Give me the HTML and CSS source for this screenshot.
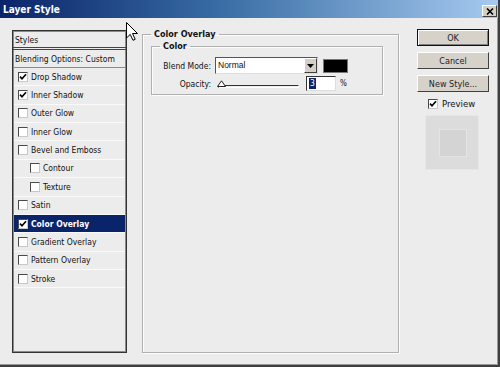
FILE: index.html
```html
<!DOCTYPE html>
<html lang="en">
<head>
  <meta charset="UTF-8" />
  <title>Layer Style</title>
  <link rel="stylesheet" href="styles.css">
</head>
<body>
  <div class="dialog">
    <div class="titlebar">
      <span class="title">Layer Style</span>
      <span class="close">
        <svg width="8" height="7" viewBox="0 0 8 7"><path d="M1 0.5 L7 6.5 M7 0.5 L1 6.5" stroke="#000" stroke-width="1.6"/></svg>
      </span>
    </div>

    <div class="content">
      <div class="styles-list">
        <div class="list-head">Styles</div>
        <div class="list-blend">Blending Options: Custom</div>
        <div class="row"><span class="cb on"></span>Drop Shadow</div>
        <div class="row"><span class="cb on"></span>Inner Shadow</div>
        <div class="row"><span class="cb"></span>Outer Glow</div>
        <div class="row"><span class="cb"></span>Inner Glow</div>
        <div class="row"><span class="cb"></span>Bevel and Emboss</div>
        <div class="row sub"><span class="cb"></span>Contour</div>
        <div class="row sub"><span class="cb"></span>Texture</div>
        <div class="row"><span class="cb"></span>Satin</div>
        <div class="row selected"><span class="cb on"></span>Color Overlay</div>
        <div class="row"><span class="cb"></span>Gradient Overlay</div>
        <div class="row"><span class="cb"></span>Pattern Overlay</div>
        <div class="row"><span class="cb"></span>Stroke</div>
      </div>

      <fieldset class="group outer">
        <legend>Color Overlay</legend>
        <fieldset class="group inner">
          <legend>Color</legend>
          <div class="field">
            <label class="field-label">Blend Mode:</label>
            <div class="select">
              <span class="select-text">Normal</span>
              <span class="select-btn">
                <svg width="7" height="4" viewBox="0 0 7 4"><path d="M0 0 H7 L3.5 4 Z" fill="#000"/></svg>
              </span>
            </div>
            <span class="swatch"></span>
          </div>
          <div class="field field-opacity">
            <label class="field-label">Opacity:</label>
            <div class="slider">
              <span class="track"></span>
              <svg class="thumb" width="9" height="7" viewBox="0 0 9 7"><path d="M0.5 6.5 L4.5 0.8 L8.5 6.5 Z" fill="#fff" stroke="#222" stroke-width="1"/></svg>
            </div>
            <div class="num"><span class="sel">3</span></div>
            <span class="unit">%</span>
          </div>
        </fieldset>
      </fieldset>

      <div class="actions">
        <button class="btn default">OK</button>
        <button class="btn">Cancel</button>
        <button class="btn">New Style...</button>
        <div class="preview-check"><span class="cb on"></span>Preview</div>
        <div class="preview-box"><div class="preview-inner"></div></div>
      </div>
    </div>

    <svg class="cursor" width="12" height="19" viewBox="0 0 12 19"><path d="M0.5 0.5 L0.5 16 L4.2 12.4 L7 18.3 L9.2 17.3 L6.5 11.5 L11.5 11.5 Z" fill="#fff" stroke="#000" stroke-width="1"/></svg>
  </div>
</body>
</html>
```

FILE: styles.css
```css
* {
  box-sizing: border-box;
}
body {
  margin: 0;
  font-family: "DejaVu Sans Condensed", "Liberation Sans", Arial, sans-serif;
  font-size: 8.5px;
  color: #111;
  background: #ececec;
}
.dialog {
  position: relative;
  width: 500px;
  height: 367px;
  background: #ececec;
  border-right: 2px solid #3e3e3e;
  border-bottom: 2px solid #3e3e3e;
  box-shadow: inset -1px -1px 0 #9a9a9a;
}
.titlebar {
  height: 18px;
  display: flex;
  align-items: center;
  justify-content: space-between;
  padding: 0 1px 0 3px;
  background: linear-gradient(to right, #0a246a 0%, #3a6ea5 45%, #a6caf0 100%);
}
.title {
  color: #fff;
  font-weight: bold;
  font-size: 10px;
}
.close {
  width: 15px;
  height: 12px;
  margin-top: 4px;
  display: flex;
  align-items: center;
  justify-content: center;
  background: #d4d0c8;
  border: 1px solid;
  border-color: #fff #404040 #404040 #fff;
}
.content {
  display: flex;
  padding: 12px 0 0 12px;
}

/* left list */
.styles-list {
  width: 115px;
  height: 323px;
  border: 1px solid #333;
  box-shadow: inset 0 0 0 1px #8a8a8a;
  background: #ececec;
}
.list-head {
  height: 19px;
  padding: 4px 0 0 2px;
  border-bottom: 3px double #444;
}
.list-blend {
  height: 18px;
  padding: 4px 0 0 2px;
  border-bottom: 1px solid #8a8a8a;
}
.row {
  height: 18.36px;
  display: flex;
  align-items: center;
  padding-left: 4px;
  margin: 0 1px;
  border-bottom: 1px solid #fafafa;
}
.row.sub {
  padding-left: 16px;
}
.row.selected {
  background: #0a246a;
  color: #fff;
  font-weight: bold;
}
.cb {
  display: inline-block;
  width: 10px;
  height: 10px;
  margin-right: 3px;
  background: #fff;
  border: 1px solid;
  border-color: #4a4a4a #c8c8c8 #c8c8c8 #4a4a4a;
  flex-shrink: 0;
}
.cb.on {
  background: #fff url("data:image/svg+xml;utf8,<svg xmlns='http://www.w3.org/2000/svg' width='8' height='8' viewBox='0 0 8 8'><path d='M1 3.6 L3 5.8 L7 1.2' fill='none' stroke='black' stroke-width='1.6'/></svg>") no-repeat center;
}

/* group boxes */
.group {
  margin: 0;
  border: 1px solid #b0b0b0;
  box-shadow: 1px 1px 0 #fdfdfd, inset 1px 1px 0 #fdfdfd;
}
.group legend {
  padding: 0 3px;
  font-weight: bold;
  font-size: 9px;
  line-height: 11px;
}
.outer {
  width: 257px;
  height: 324px;
  margin: -1px 0 0 15px;
  padding: 1px 15px 0 8px;
}
.inner {
  width: 232px;
  padding: 5px 8px 3px 8px;
}
.field {
  display: flex;
  align-items: center;
  height: 17px;
}
.field-opacity {
  height: 15px;
  margin-top: 2px;
}
.field-label {
  width: 51px;
  text-align: right;
}
.select {
  display: flex;
  width: 103px;
  height: 17px;
  margin-left: 4px;
  background: #fff;
  border: 1px solid;
  border-color: #555 #ddd #ddd #555;
}
.select-text {
  flex: 1;
  padding: 2px 0 0 2px;
  font-family: "Liberation Sans", Arial, sans-serif;
  font-size: 8.5px;
}
.select-btn {
  width: 13px;
  display: flex;
  align-items: center;
  justify-content: center;
  background: #d4d0c8;
  border: 1px solid;
  border-color: #fff #404040 #404040 #fff;
}
.swatch {
  width: 25px;
  height: 14px;
  margin-left: 5px;
  background: #000;
  border: 1px solid #777;
}
.slider {
  position: relative;
  width: 82px;
  height: 12px;
  margin-left: 6px;
}
.track {
  position: absolute;
  left: 1px;
  right: 0;
  top: 7px;
  height: 3px;
  background: #ececec;
  border: 1px solid;
  border-color: #333 #fff #fff #333;
}
.thumb {
  position: absolute;
  left: 0;
  top: 2px;
}
.num {
  width: 30px;
  height: 15px;
  margin-left: 7px;
  background: #fff;
  border: 1px solid;
  border-color: #333 #ddd #ddd #333;
  padding: 1px 0 0 2px;
}
.sel {
  display: inline-block;
  background: #0a246a;
  color: #fff;
  padding: 0 1px;
  line-height: 11px;
}
.unit {
  margin-left: 4px;
  font-size: 8px;
}

/* right column */
.actions {
  display: flex;
  flex-direction: column;
  width: 72px;
  margin: -1px 0 0 18px;
}
.btn {
  width: 72px;
  height: 17px;
  margin-bottom: 6px;
  padding: 0;
  font-family: inherit;
  font-size: 9px;
  color: #222;
  background: #d6d2ca;
  border: 1px solid;
  border-color: #fff #404040 #404040 #fff;
}
.btn.default {
  border: 1px solid #111;
  box-shadow: inset 1px 1px 0 #fff, inset -1px -1px 0 #808080;
}
.preview-check {
  display: flex;
  align-items: center;
  margin: 0 0 6px 11px;
  font-size: 9.5px;
}
.preview-check .cb {
  margin-right: 4px;
}
.preview-box {
  width: 54px;
  height: 55px;
  margin-left: 8px;
  padding: 13px;
  background: #dcdcdc;
  border: 1px solid #e6e6e6;
}
.preview-inner {
  width: 28px;
  height: 28px;
  background: #d4d4d4;
  border: 1px solid #e4e4e4;
}
.cursor {
  position: absolute;
  left: 126px;
  top: 22px;
}
```
